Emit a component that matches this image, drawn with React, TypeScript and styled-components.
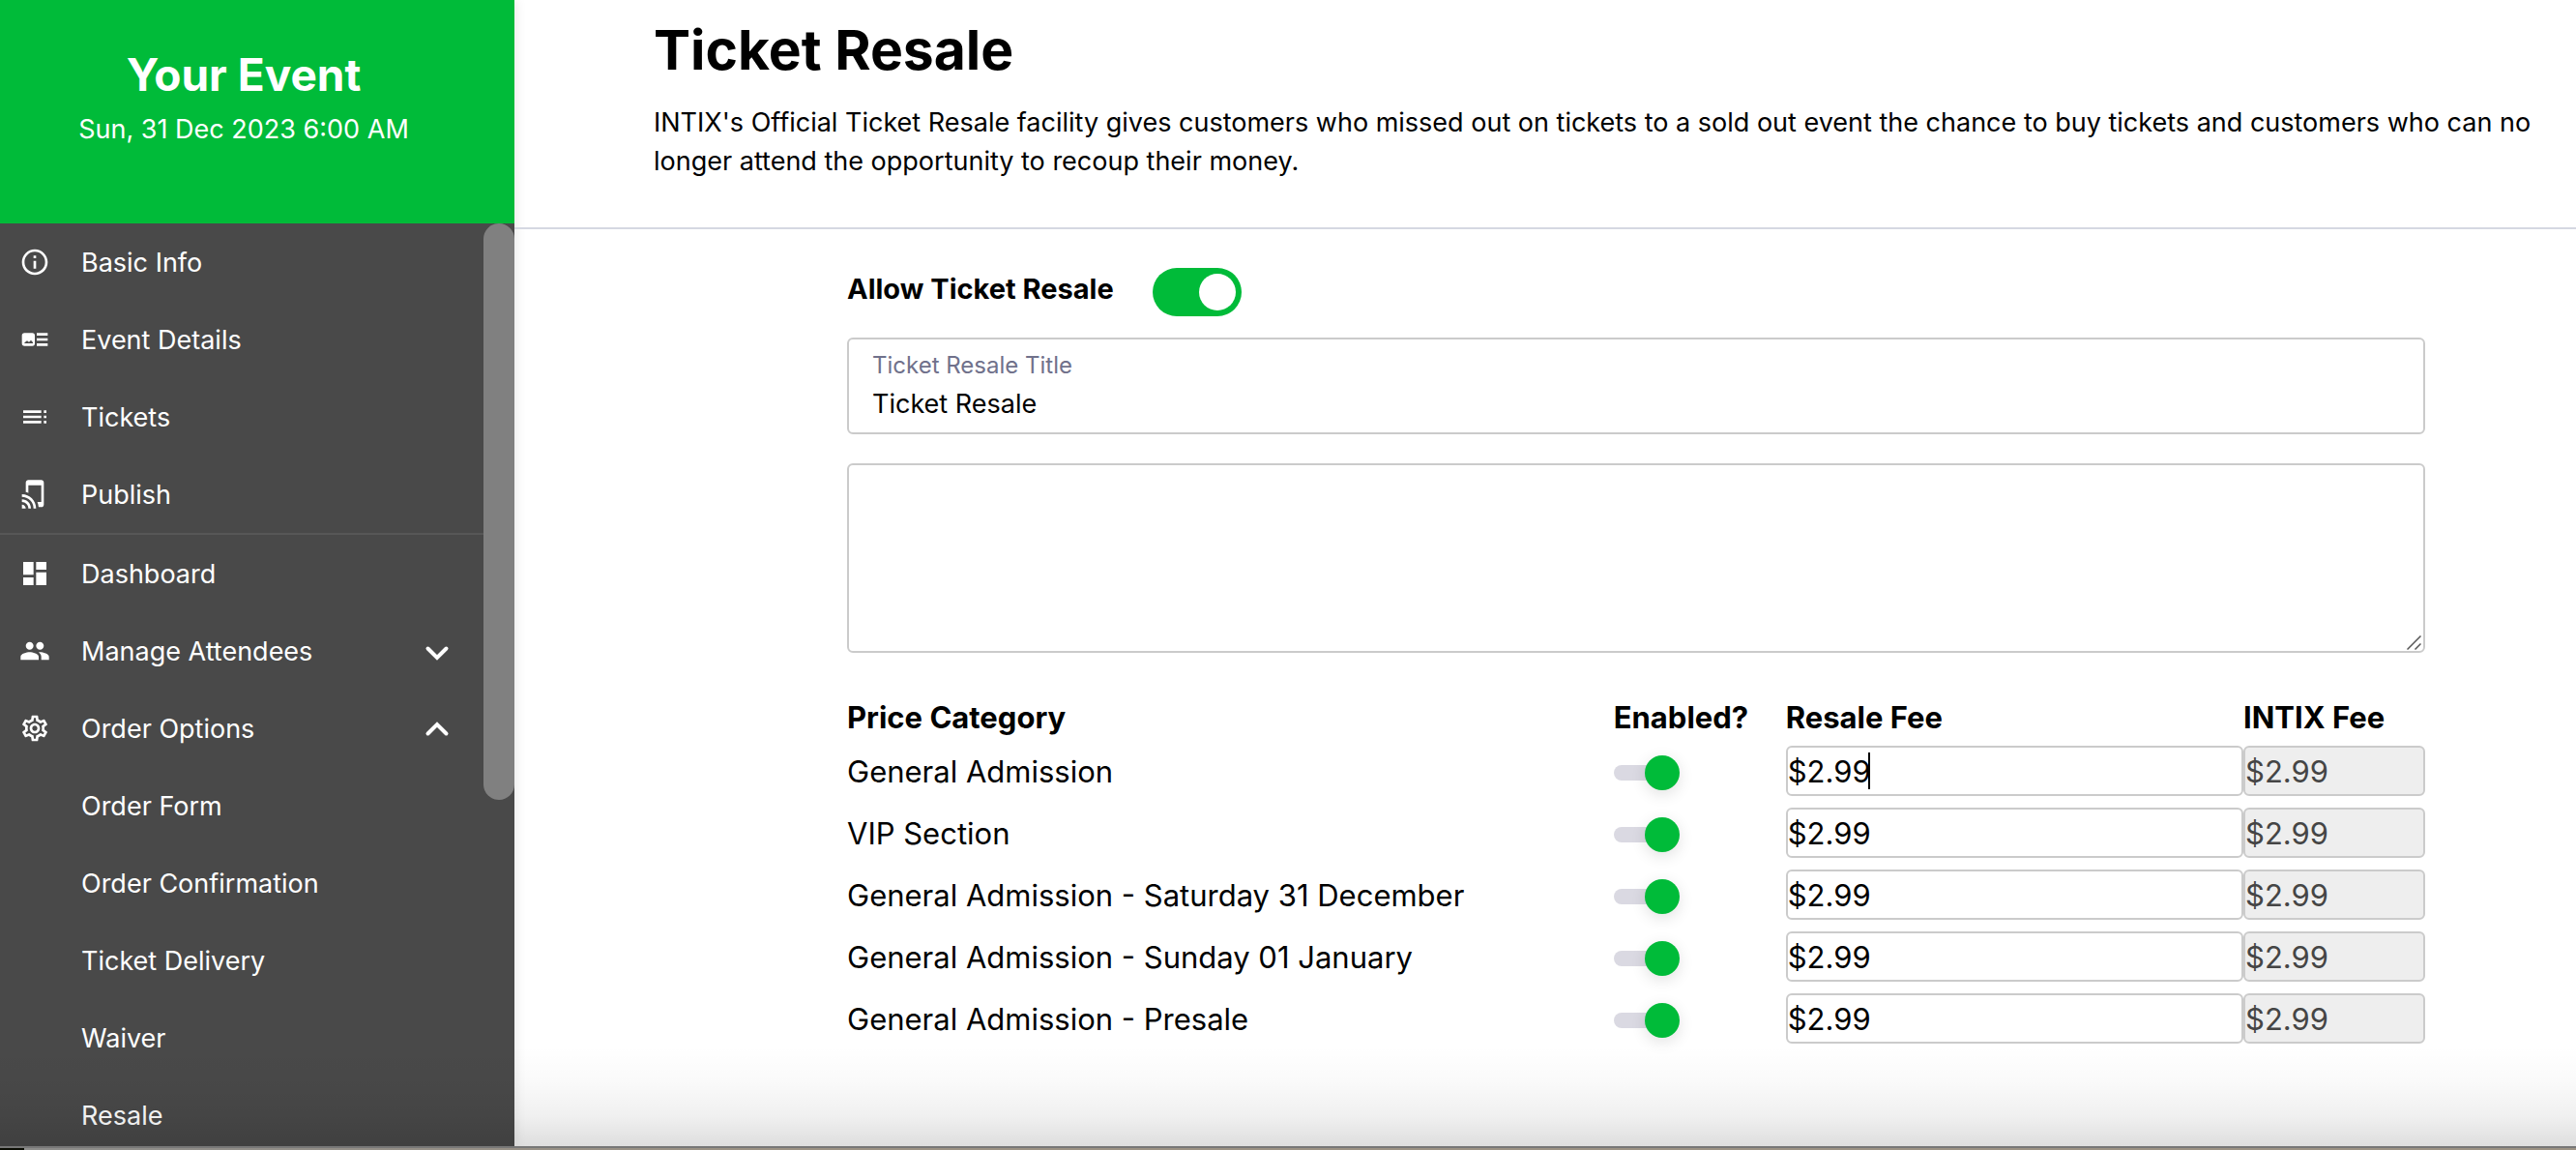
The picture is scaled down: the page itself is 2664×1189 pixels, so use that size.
import React, { useState } from "react";
import styled, { createGlobalStyle, css } from "styled-components";
import {
  MdDashboard,
  MdInfoOutline,
  MdOutlineSettings,
  MdPeople,
  MdTapAndPlay,
  MdToc,
} from "react-icons/md";

const green = "#00bb39";
const border = "#cbcbcb";

const GlobalStyle = createGlobalStyle`
  *, *::before, *::after { box-sizing: border-box; }
  body {
    margin: 0;
    background: #fff;
    color: #000;
    font-family: Inter, "Liberation Sans", sans-serif;
    font-size: 27px;
  }
  h1, h2, p { margin: 0; }
  input, textarea, button { font: inherit; color: inherit; }
`;

const Shell = styled.div`
  position: relative;
  display: flex;
  flex-direction: column;
  height: 100vh;
  overflow: hidden;
`;

const Columns = styled.div`
  flex: 1;
  min-height: 0;
  display: flex;
`;

const Sidebar = styled.aside`
  flex: 0 0 532px;
  display: flex;
  flex-direction: column;
  background: #494949;
  color: #fff;
  box-shadow: 0 0 12px rgba(0, 0, 0, 0.12);
`;

const EventHeader = styled.header`
  height: 231px;
  padding: 48px 28px 0 0;
  background: ${green};
  text-align: center;
`;

const EventName = styled.h2`
  font-size: 46px;
  line-height: 58px;
  font-weight: 700;
`;

const EventDate = styled.p`
  margin-top: 8px;
  line-height: 40px;
`;

const NavArea = styled.div`
  flex: 1;
  min-height: 0;
  display: flex;
  overflow: hidden;
`;

const Nav = styled.nav`
  flex: 1;
`;

const NavGroup = styled.ul`
  margin: 0;
  padding: 0;
  list-style: none;

  & + & {
    border-top: 2px solid #575757;
  }
`;

const navRow = css`
  display: flex;
  align-items: center;
  width: 100%;
  height: 80px;
  padding: 0 32px 0 20px;
  border: 0;
  background: none;
  color: #fff;
  text-align: left;
  text-decoration: none;
`;

const NavLink = styled.a`
  ${navRow}
`;

const NavToggle = styled.button`
  ${navRow}
`;

const NavIcon = styled.span`
  flex: 0 0 64px;
  display: flex;
  font-size: 32px;
`;

const NavLabel = styled.span`
  flex: 1;
`;

const ScrollTrack = styled.div`
  flex: 0 0 32px;
`;

const ScrollThumb = styled.div`
  height: 62.5%;
  border-radius: 16px;
  background: #808080;
`;

const Main = styled.main`
  flex: 1;
  min-width: 0;
`;

const PageHeader = styled.header`
  padding: 16px 16px 48px 144px;
  border-bottom: 2px solid #d5d8e2;
`;

const Title = styled.h1`
  font-size: 57px;
  line-height: 72px;
  font-weight: 700;
`;

const Intro = styled.p`
  margin-top: 19px;
  line-height: 40px;
`;

const Form = styled.form`
  padding: 40px 156px 0 344px;
`;

const AllowRow = styled.label`
  display: flex;
  gap: 40px;
  height: 50px;
  font-size: 29px;
  line-height: 44px;
  font-weight: 700;
`;

const BigSwitch = styled.input`
  appearance: none;
  width: 92px;
  height: 50px;
  margin: 0;
  padding: 6px;
  border-radius: 25px;
  background: #c9c9c9;

  &::before {
    content: "";
    display: block;
    width: 38px;
    height: 38px;
    border-radius: 50%;
    background: #fff;
  }
  &:checked {
    background: ${green};
  }
  &:checked::before {
    margin-left: 42px;
  }
`;

const TitleField = styled.label`
  display: flex;
  flex-direction: column;
  height: 100px;
  margin-top: 22px;
  padding: 8px 24px;
  border: 2px solid ${border};
  border-radius: 6px;
`;

const FieldCaption = styled.span`
  color: #70718b;
  font-size: 24px;
  line-height: 38px;
`;

const FieldInput = styled.input`
  height: 40px;
  padding: 0;
  border: 0;
  outline: 0;
  background: none;
`;

const Description = styled.textarea`
  display: block;
  width: 100%;
  height: 196px;
  margin-top: 30px;
  padding: 12px 24px;
  border: 2px solid ${border};
  border-radius: 6px;
  outline: 0;
  resize: none;
`;

const DescriptionBox = styled.div`
  position: relative;
`;

const ResizeGrip = styled.svg`
  position: absolute;
  right: 4px;
  bottom: 3px;
  pointer-events: none;
`;

const PriceTable = styled.table`
  width: 100%;
  margin-top: 42px;
  border-collapse: collapse;
  table-layout: fixed;
  font-size: 31px;
`;

const HeadCell = styled.th<{ $width?: string }>`
  width: ${(p) => p.$width ?? "auto"};
  height: 48px;
  padding: 0;
  text-align: left;
  font-weight: 700;
`;

const Cell = styled.td`
  height: 64px;
  padding: 0;
`;

const SmallSwitch = styled.input`
  appearance: none;
  display: flex;
  align-items: center;
  width: 68px;
  height: 16px;
  margin: 4px 0 0;
  border-radius: 8px;
  background: linear-gradient(#dad9e2, #dad9e2) 0 0 / 64px 16px no-repeat;

  &::before {
    content: "";
    flex: 0 0 36px;
    height: 36px;
    border-radius: 50%;
    background: #8c8c98;
    box-shadow: 0 4px 16px rgba(0, 0, 0, 0.12);
  }
  &:checked::before {
    margin-left: 32px;
    background: ${green};
  }
`;

const FeeBox = styled.div`
  position: relative;
`;

const FeeInput = styled.input`
  display: block;
  width: 100%;
  height: 52px;
  padding: 0;
  border: 2px solid ${border};
  border-radius: 6px;
  outline: 0;
  background: #fff;

  &:disabled {
    background: #eee;
    color: #454545;
  }
`;

const Caret = styled.span`
  position: absolute;
  top: 7px;
  left: 85px;
  width: 2px;
  height: 38px;
  background: #000;
`;

const BottomShade = styled.div`
  position: absolute;
  left: 0;
  right: 0;
  bottom: 4px;
  height: 104px;
  pointer-events: none;
  background: linear-gradient(
    rgba(0, 0, 0, 0),
    rgba(0, 0, 0, 0.02) 35%,
    rgba(0, 0, 0, 0.06) 70%,
    rgba(0, 0, 0, 0.13)
  );
`;

const DesktopEdge = styled.div`
  flex: 0 0 4px;
  border-top: 2px solid #777;
  background: linear-gradient(90deg, #0b0d04 25px, #8d8d8b 25px, #9c9284 30%);
`;

function Chevron({ up }: { up?: boolean }) {
  return (
    <svg width="32" height="32" viewBox="0 0 32 32" fill="none" stroke="currentColor" strokeWidth="4" strokeLinecap="round">
      <path d={up ? "M6.5 21.5L16 12l9.5 9.5" : "M6.5 13.5L16 23l9.5-9.5"} />
    </svg>
  );
}

function DetailsIcon() {
  return (
    <svg width="32" height="32" viewBox="0 0 24 24" fill="currentColor" fillRule="evenodd">
      <path d="M4 7h6a2 2 0 0 1 2 2v6a2 2 0 0 1-2 2H4a2 2 0 0 1-2-2V9a2 2 0 0 1 2-2zM4 15h6.500v-.8l-1.500-1.700-1.500 1.500-1.500-1L4 14.500z" />
      <path d="M13.500 7H22v2h-8.500zM13.500 11H22v2h-8.500zM13.500 15H22v2h-8.500z" />
    </svg>
  );
}

type Item = { label: string; icon?: React.ReactNode; open?: boolean };

const setupItems: Item[] = [
  { label: "Basic Info", icon: <MdInfoOutline /> },
  { label: "Event Details", icon: <DetailsIcon /> },
  { label: "Tickets", icon: <MdToc /> },
  { label: "Publish", icon: <MdTapAndPlay /> },
];

const manageItems: Item[] = [
  { label: "Dashboard", icon: <MdDashboard /> },
  { label: "Manage Attendees", icon: <MdPeople />, open: false },
  { label: "Order Options", icon: <MdOutlineSettings />, open: true },
  { label: "Order Form" },
  { label: "Order Confirmation" },
  { label: "Ticket Delivery" },
  { label: "Waiver" },
  { label: "Resale" },
];

function NavItems({ items }: { items: Item[] }) {
  return (
    <NavGroup>
      {items.map(({ label, icon, open }) => (
        <li key={label}>
          {open === undefined ? (
            <NavLink href="#">
              <NavIcon>{icon}</NavIcon>
              <NavLabel>{label}</NavLabel>
            </NavLink>
          ) : (
            <NavToggle type="button" aria-expanded={open}>
              <NavIcon>{icon}</NavIcon>
              <NavLabel>{label}</NavLabel>
              <Chevron up={open} />
            </NavToggle>
          )}
        </li>
      ))}
    </NavGroup>
  );
}

const categories = [
  "General Admission",
  "VIP Section",
  "General Admission - Saturday 31 December",
  "General Admission - Sunday 01 January",
  "General Admission - Presale",
];

function PriceRow({ name, editing }: { name: string; editing: boolean }) {
  const [enabled, setEnabled] = useState(true);
  const [fee, setFee] = useState("$2.99");
  return (
    <tr>
      <Cell>{name}</Cell>
      <Cell>
        <SmallSwitch
          type="checkbox"
          aria-label={`${name} enabled`}
          checked={enabled}
          onChange={(e) => setEnabled(e.target.checked)}
        />
      </Cell>
      <Cell>
        <FeeBox>
          <FeeInput aria-label={`${name} resale fee`} value={fee} onChange={(e) => setFee(e.target.value)} />
          {editing && <Caret />}
        </FeeBox>
      </Cell>
      <Cell>
        <FeeInput aria-label={`${name} INTIX fee`} value="$2.99" disabled />
      </Cell>
    </tr>
  );
}

export default function App() {
  const [allowed, setAllowed] = useState(true);
  return (
    <Shell>
      <GlobalStyle />
      <Columns>
        <Sidebar>
          <EventHeader>
            <EventName>Your Event</EventName>
            <EventDate>Sun, 31 Dec 2023 6:00 AM</EventDate>
          </EventHeader>
          <NavArea>
            <Nav>
              <NavItems items={setupItems} />
              <NavItems items={manageItems} />
            </Nav>
            <ScrollTrack>
              <ScrollThumb />
            </ScrollTrack>
          </NavArea>
        </Sidebar>
        <Main>
          <PageHeader>
            <Title>Ticket Resale</Title>
            <Intro>
              INTIX's Official Ticket Resale facility gives customers who missed out on tickets to a sold out event the
              chance to buy tickets and customers who can no longer attend the opportunity to recoup their money.
            </Intro>
          </PageHeader>
          <Form>
            <AllowRow>
              Allow Ticket Resale
              <BigSwitch type="checkbox" checked={allowed} onChange={(e) => setAllowed(e.target.checked)} />
            </AllowRow>
            <TitleField>
              <FieldCaption>Ticket Resale Title</FieldCaption>
              <FieldInput defaultValue="Ticket Resale" />
            </TitleField>
            <DescriptionBox>
              <Description aria-label="Ticket resale description" />
              <ResizeGrip width="15" height="15" viewBox="0 0 15 15" stroke="#555" strokeWidth="1.5">
                <path d="M0.5 14.5L14.5 0.5M8.5 14.5L14.5 8.5" />
              </ResizeGrip>
            </DescriptionBox>
            <PriceTable>
              <thead>
                <tr>
                  <HeadCell>Price Category</HeadCell>
                  <HeadCell $width="178px">Enabled?</HeadCell>
                  <HeadCell $width="29%">Resale Fee</HeadCell>
                  <HeadCell $width="188px">INTIX Fee</HeadCell>
                </tr>
              </thead>
              <tbody>
                {categories.map((name, i) => (
                  <PriceRow key={name} name={name} editing={i === 0} />
                ))}
              </tbody>
            </PriceTable>
          </Form>
        </Main>
      </Columns>
      <BottomShade />
      <DesktopEdge />
    </Shell>
  );
}
